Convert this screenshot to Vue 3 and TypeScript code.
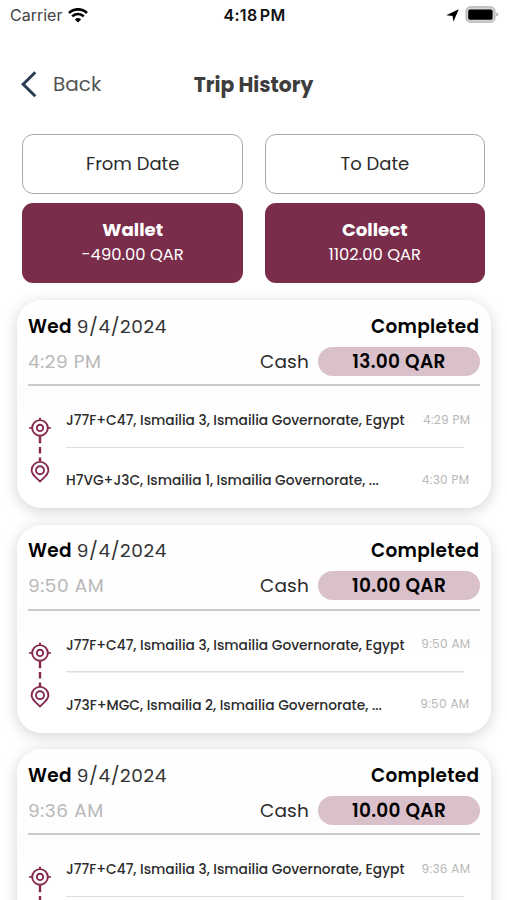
<script setup lang="ts">
interface Stop {
  address: string
  time: string
}
interface Trip {
  day: string
  date: string
  time: string
  status: string
  method: string
  fare: string
  stops: Stop[]
}

const filters: string[] = ['From Date', 'To Date']
const totals = [
  { label: 'Wallet', amount: '-490.00 QAR' },
  { label: 'Collect', amount: '1102.00 QAR' },
]
const pickup = 'J77F+C47, Ismailia 3, Ismailia Governorate, Egypt'
const base = { day: 'Wed', date: '9/4/2024', status: 'Completed', method: 'Cash' }
const trips: Trip[] = [
  {
    ...base,
    time: '4:29 PM',
    fare: '13.00 QAR',
    stops: [
      { address: pickup, time: '4:29 PM' },
      { address: 'H7VG+J3C, Ismailia 1, Ismailia Governorate, ...', time: '4:30 PM' },
    ],
  },
  {
    ...base,
    time: '9:50 AM',
    fare: '10.00 QAR',
    stops: [
      { address: pickup, time: '9:50 AM' },
      { address: 'J73F+MGC, Ismailia 2, Ismailia Governorate, ...', time: '9:50 AM' },
    ],
  },
  {
    ...base,
    time: '9:36 AM',
    fare: '10.00 QAR',
    stops: [{ address: pickup, time: '9:36 AM' }],
  },
]
</script>

<template>
  <main class="screen">
    <div class="status">
      <div class="carrier">
        <span>Carrier</span>
        <svg class="wifi" width="20" height="15" viewBox="0 0 20 15">
          <path d="M1 5a12.8 12.8 0 0 1 18 0" />
          <path d="M4.2 8.4a8.2 8.2 0 0 1 11.6 0" />
          <path class="dot" d="M10 14.6 6.9 11.4a4.5 4.5 0 0 1 6.2 0z" />
        </svg>
      </div>
      <span class="clock">4:18 PM</span>
      <div class="indicators">
        <svg class="arrow" width="13" height="13" viewBox="0 0 13 13"><path d="M12.8.2 7.4 12.8 6.6 7.1.2 6.2z" /></svg>
        <svg width="34" height="17" viewBox="0 0 34 17">
          <rect x="1" y=".8" width="29" height="15.4" rx="4.3" fill="#d2d2d2" stroke="#aaa" stroke-width="1" />
          <rect x="3.2" y="3.4" width="24.4" height="10.4" rx="1.8" />
          <path d="M31.3 6.5q2 .5 2 2t-2 2z" fill="#aaa" />
        </svg>
      </div>
    </div>

    <header class="nav">
      <button class="back" type="button">
        <svg width="17" height="28" viewBox="0 0 17 28"><path d="M15.3 2.2 3.2 14.2l12.1 12" /></svg>
        <span>Back</span>
      </button>
      <h1>Trip History</h1>
    </header>

    <section class="summary">
      <button v-for="f in filters" :key="f" class="filter" type="button">{{ f }}</button>
      <div v-for="t in totals" :key="t.label" class="total">
        <strong>{{ t.label }}</strong>
        <span>{{ t.amount }}</span>
      </div>
    </section>

    <section class="trips">
      <article v-for="trip in trips" :key="trip.time" class="card">
        <div class="row title">
          <div class="when">
            <b>{{ trip.day }}</b>
            <span>{{ trip.date }}</span>
          </div>
          <b class="state">{{ trip.status }}</b>
        </div>
        <div class="row payment">
          <span class="time">{{ trip.time }}</span>
          <span class="method">{{ trip.method }}</span>
          <b class="fare">{{ trip.fare }}</b>
        </div>
        <div class="route">
          <svg class="track" width="24" height="68" viewBox="0 0 24 68">
            <circle cx="12" cy="11.9" r="7.8" />
            <circle cx="12" cy="11.9" r="3.2" />
            <path d="M12 1.7v2.4M1.2 11.9h3M19.8 11.9h3" />
            <path class="dash" d="M12 19.7v7.6M12 31v6.6M12 41.4v4.6" />
            <path d="M12 65.4C8.6 61.9 3.6 59.1 3.6 54.3a8.4 8.4 0 0 1 16.8 0c0 4.8-5 7.6-8.4 11.1z" />
            <circle cx="12" cy="54.3" r="4" />
          </svg>
          <div class="stops">
            <div v-for="stop in trip.stops" :key="stop.address" class="stop">
              <span class="address">{{ stop.address }}</span>
              <span class="stamp">{{ stop.time }}</span>
            </div>
          </div>
        </div>
      </article>
    </section>
  </main>
</template>

<style>
body {
  background: #fff;
  overflow: hidden;
}
</style>

<style scoped>
* {
  box-sizing: border-box;
}
.screen {
  height: 900px;
  overflow: hidden;
  font-family: Poppins, Inter, sans-serif;
  color: #2b2b2b;
  background: #fff;
}
svg {
  display: block;
  flex: none;
}
button {
  font: inherit;
  color: inherit;
  background: none;
  border: 0;
  padding: 0;
}
.status {
  display: grid;
  grid-template-columns: 1fr auto 1fr;
  align-items: center;
  height: 30px;
  padding: 0 8px 0 10px;
  font-family: Inter, sans-serif;
  font-size: 16px;
}
.carrier {
  display: flex;
  align-items: center;
  gap: 6px;
  color: #444;
}
.wifi {
  fill: none;
  stroke: #000;
  stroke-width: 2.7;
}
.wifi .dot {
  fill: #000;
  stroke: none;
}
.clock {
  font-weight: 600;
  letter-spacing: 0.3px;
  word-spacing: -2px;
  color: #111;
}
.indicators {
  display: flex;
  align-items: center;
  justify-content: flex-end;
  gap: 6px;
  padding-bottom: 2px;
}
.arrow {
  margin-top: 2px;
}
.nav {
  display: grid;
  grid-template-columns: 1fr auto 1fr;
  align-items: center;
  height: 108px;
  padding: 0 20px;
}
.back {
  display: flex;
  align-items: center;
  gap: 16px;
  font-size: 20px;
  color: #555;
}
.back path {
  fill: none;
  stroke: #2c3c55;
  stroke-width: 3;
}
h1 {
  margin: 2px 0 0;
  font-size: 20.3px;
  font-weight: 700;
  color: #3d3d3d;
}
.summary {
  display: grid;
  grid-template-columns: 1fr 1fr;
  grid-template-rows: 60px 80.5px;
  gap: 8.5px 21.5px;
  padding: 0 21.9px 0 22.4px;
  margin-top: -4px;
}
.filter {
  padding-bottom: 2px;
  border: 1.5px solid #aaa;
  border-radius: 11px;
  font-size: 18px;
}
.total {
  display: flex;
  flex-direction: column;
  align-items: center;
  padding-top: 14px;
  border-radius: 11px;
  background: #7a2d4b;
  color: #fff;
  line-height: 25px;
}
.total strong {
  font-size: 18.2px;
}
.total span {
  font-size: 16.4px;
}
.trips {
  display: flex;
  flex-direction: column;
  gap: 16.5px;
  padding: 17px 16px 0 17px;
}
.card {
  flex: none;
  height: 208px;
  padding: 11px 11px 0;
  border-radius: 25px;
  background: linear-gradient(#fff, #fdfdfd 48%, #fff 60%);
  box-shadow: 0 3px 15px rgba(0, 0, 0, 0.18);
}
.row {
  display: flex;
  align-items: center;
  white-space: nowrap;
}
.title {
  justify-content: space-between;
  height: 30px;
  font-size: 18.5px;
  color: #000;
}
.title b {
  font-weight: 600;
  letter-spacing: 0.28px;
}
.title .state {
  margin-right: 0.8px;
}
.when {
  display: flex;
  gap: 5px;
}
.when span {
  color: #333;
  letter-spacing: 0.6px;
}
.payment {
  height: 45px;
  padding-bottom: 3px;
  border-bottom: 2.5px solid #cbcbcb;
  font-size: 18.5px;
}
.time {
  flex: 1;
  color: #b8b8b8;
  letter-spacing: 0.6px;
}
.method {
  margin-right: 9px;
  letter-spacing: 0.2px;
}
.fare {
  width: 162px;
  height: 29px;
  border-radius: 15px;
  background: #d9c0cb;
  color: #000;
  font-weight: 600;
  line-height: 30px;
  letter-spacing: 0.3px;
  text-align: center;
}
.route {
  display: flex;
}
.track {
  margin-top: 30px;
  fill: none;
  stroke: #86294f;
  stroke-width: 1.9;
}
.track .dash {
  stroke-width: 2.4;
}
.stops {
  flex: 1;
  margin-left: 14px;
}
.stop {
  display: flex;
  align-items: center;
  justify-content: space-between;
  height: 60px;
  padding: 6px 10.5px 0 0;
  white-space: nowrap;
}
.stop:first-child {
  height: 62px;
  padding: 8.5px 9.5px 0 0;
  background: linear-gradient(#ddd, #ddd) left bottom / 398px 1.5px no-repeat;
}
.address {
  font-size: 13.77px;
  font-weight: 500;
}
.stamp {
  padding-bottom: 3px;
  font-size: 12px;
  letter-spacing: 0.35px;
  color: #b8b8b8;
}
</style>
